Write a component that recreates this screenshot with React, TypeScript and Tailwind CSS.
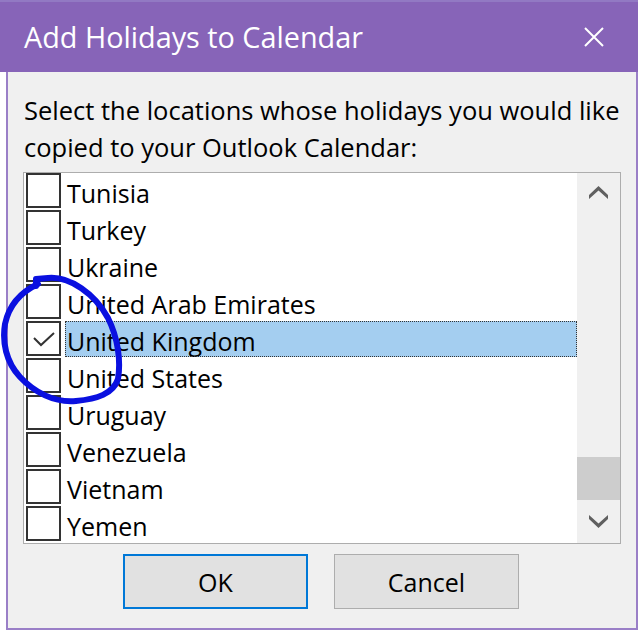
import React from 'react';

const countries = [
  'Tunisia',
  'Turkey',
  'Ukraine',
  'United Arab Emirates',
  'United Kingdom',
  'United States',
  'Uruguay',
  'Venezuela',
  'Vietnam',
  'Yemen',
];

const selected = 'United Kingdom';

function Chevron({ down = false }: { down?: boolean }) {
  return (
    <svg width="19" height="13" viewBox="0 0 19 13" className={down ? 'rotate-180' : ''}>
      <polygon points="0,9 9.5,0 19,9 19,13 9.5,4.5 0,13" fill="#606060" />
    </svg>
  );
}

export default function App() {
  return (
    <div className="relative w-[638px] h-[630px] bg-white font-['Open_Sans',sans-serif] text-black overflow-hidden">
      {/* title bar */}
      <div className="h-[72px] bg-[#8764b8] border-t-2 border-[#9279c3] flex items-center justify-between pl-[24px] pr-[34px]">
        <span className="text-white text-[28.8px] leading-none">Add Holidays to Calendar</span>
        <svg width="20" height="20" viewBox="0 0 20 20">
          <path d="M1 1 L19 19 M19 1 L1 19" stroke="white" strokeWidth="2" />
        </svg>
      </div>

      {/* dialog body */}
      <div className="ml-[6px] h-[558px] border-x-2 border-b-2 border-[#9a7fc7] bg-[#f0f0f0] pl-[16px] pt-[20px]">
        <p className="text-[25.5px] leading-[37px] whitespace-nowrap">
          Select the locations whose holidays you would like
          <br />
          copied to your Outlook Calendar:
        </p>

        <div className="mt-[6px] -ml-[1px] w-[598px] h-[372px] border border-[#adadad] bg-white flex">
          <div className="flex-1 pl-[2px]">
            {countries.map((name) => {
              const isSel = name === selected;
              return (
                <div key={name} className="h-[37px] flex items-start">
                  <div className="w-[35px] h-[35px] border-2 border-[#333333] bg-white flex items-center justify-center shrink-0">
                    {isSel && (
                      <svg width="24" height="16" viewBox="0 0 24 16">
                        <path d="M2 7 L9 14 L22 2" fill="none" stroke="#333333" strokeWidth="2" />
                      </svg>
                    )}
                  </div>
                  <div
                    className={
                      isSel
                        ? 'ml-[4px] flex-1 h-[36px] pl-[2px] pt-[2px] text-[25px] leading-[36px] bg-[#a4cef0] outline-1 outline-dotted outline-[#333333] -outline-offset-1'
                        : 'ml-[4px] flex-1 h-[36px] pl-[2px] pt-[2px] text-[25px] leading-[36px]'
                    }
                  >
                    {name}
                  </div>
                </div>
              );
            })}
          </div>

          {/* scrollbar */}
          <div className="w-[43px] bg-[#f0f0f0] flex flex-col">
            <div className="h-[43px] flex items-center justify-center pb-[4px]">
              <Chevron />
            </div>
            <div className="flex-1" />
            <div className="h-[43px] bg-[#cdcdcd]" />
            <div className="h-[43px] flex items-center justify-center">
              <Chevron down />
            </div>
          </div>
        </div>

        <div className="mt-[10px] ml-[99px] flex gap-[26px]">
          <button className="w-[185px] h-[55px] pt-[3px] border-2 border-[#0078d7] bg-[#e1e1e1] text-[25px]">OK</button>
          <button className="w-[185px] h-[55px] pt-[3px] border border-[#adadad] bg-[#e1e1e1] text-[25px]">Cancel</button>
        </div>
      </div>

      {/* hand-drawn pen annotation */}
      <svg className="absolute left-0 top-0 pointer-events-none" width="638" height="630" viewBox="0 0 638 630">
        <path
          d="M36 286 L36 279 L48 278 C70 276 95 294 108 318 C118 338 121 361 118 379 C113 394 97 399 76 401 C54 403 34 392 20 377 C6 362 2 342 5 324 C9 305 21 292 38 284"
          fill="none"
          stroke="#0a10e0"
          strokeWidth="6"
          strokeLinecap="round"
          strokeLinejoin="round"
        />
      </svg>
    </div>
  );
}
